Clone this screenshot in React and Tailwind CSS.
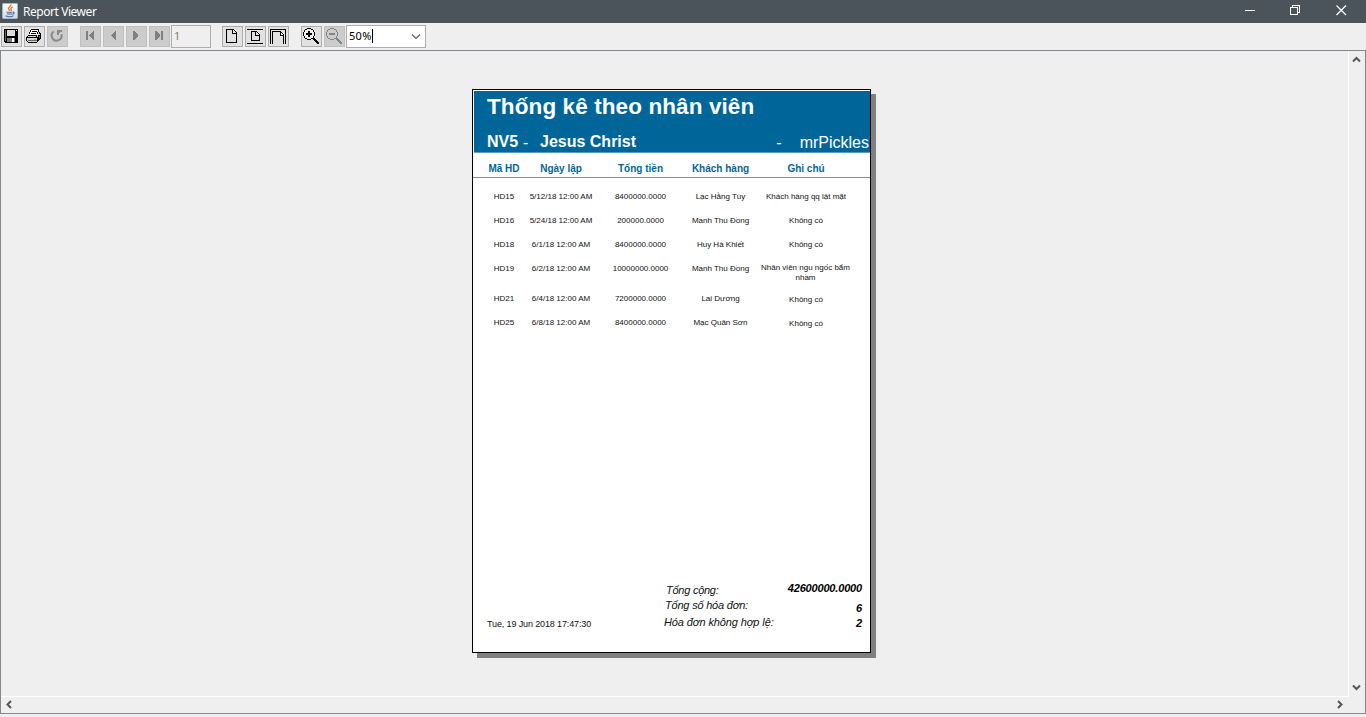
import React from "react";

const rows = [
  { id: "HD15", date: "5/12/18 12:00 AM", total: "8400000.0000", name: "Lạc Hằng Tùy", note: "Khách hàng qq lật mặt", h: "h-6", pad: "" },
  { id: "HD16", date: "5/24/18 12:00 AM", total: "200000.0000", name: "Manh Thu Đồng", note: "Không có", h: "h-6", pad: "" },
  { id: "HD18", date: "6/1/18 12:00 AM", total: "8400000.0000", name: "Huy Hà Khiết", note: "Không có", h: "h-6", pad: "" },
  { id: "HD19", date: "6/2/18 12:00 AM", total: "10000000.0000", name: "Manh Thu Đồng", note: "Nhân viên ngu ngốc bẩm nhầm", h: "h-[30px]", pad: "-mt-px -ml-px" },
  { id: "HD21", date: "6/4/18 12:00 AM", total: "7200000.0000", name: "Lai Dương", note: "Không có", h: "h-6", pad: "pt-px" },
  { id: "HD25", date: "6/8/18 12:00 AM", total: "8400000.0000", name: "Mạc Quân Sơn", note: "Không có", h: "h-6", pad: "pt-px" },
];

const COLS = "grid grid-cols-[34px_80px_79px_81px_90px] pl-[14px] text-center";

function Icon({ children, className = "" }) {
  return (
    <svg width="19" height="19" viewBox="0 0 19 19" shapeRendering="crispEdges" fill="none" stroke="#000" className={"shrink-0 " + className}>
      {children}
    </svg>
  );
}

function Btn({ disabled, children }) {
  return (
    <button
      className={
        "flex h-[21px] w-[21px] shrink-0 items-center justify-center border " +
        (disabled ? "border-[#bfbfbf] bg-[#cccccc]" : "border-[#adadad] bg-[#e1e1e1]")
      }
    >
      {children}
    </button>
  );
}

function JavaLogo() {
  return (
    <svg width="16" height="16" viewBox="0 0 16 16" fill="none" className="shrink-0">
      <defs>
        <linearGradient id="tile" x1="0" y1="0" x2="0" y2="1">
          <stop offset="0" stopColor="#ffffff" />
          <stop offset="1" stopColor="#cfdbe6" />
        </linearGradient>
      </defs>
      <rect x=".5" y=".5" width="15" height="15" rx="1" fill="url(#tile)" stroke="#9fb6cb" />
      <path d="M8.800 1.500c.8 1.800-3 2.600-2.300 4.300.2.700 1.100 1.200 1.300 2M10.800 3.800c-1.800.8-2.500 1.700-1.600 2.800.2.400.1.800-.2 1.300" stroke="#e8762c" strokeWidth="1.300" />
      <path d="M4.500 9.300h5.700M5 11h5M3.500 12.800c2 .9 6 .9 8 0M10.600 9.200c2-.6 2.500 1.200-.2 2.200" stroke="#436d93" strokeWidth="1.100" />
    </svg>
  );
}

function Magnifier({ plus, color, light }) {
  return (
    <Icon>
      <path d="M4 3h5v1h2v2h1v4h-1v1h-2v1h-4v-1h-2v-2h-1v-4h1v-1h1z" fill={light} stroke="none" />
      <path d="M5 1.500h4M3 2.500h2M9 2.500h2M2.500 3v2M11.500 3v2M1.500 5v4M12.500 5v4M2.500 9v2M11.500 9v2M3 11.500h2M9 11.500h3M5 12.500h4" stroke={color} />
      <path d="M4 7h6" stroke={color} strokeWidth="2" />
      {plus && <path d="M7 4v6" stroke={color} strokeWidth="2" />}
      <path d="M11 11h2v1h1v1h1v1h1v1h1v2h-2v-1h-1v-1h-1v-1h-1v-1h-1z" fill={color} stroke="none" />
    </Icon>
  );
}

function TitleBar() {
  return (
    <div className="flex h-[23px] shrink-0 items-start bg-[#4c545b] pl-[2px] text-white">
      <div className="pt-[3px]"><JavaLogo /></div>
      <span className="ml-[5px] pt-1 font-['Noto_Sans',sans-serif] text-[12px] leading-4 tracking-[-0.45px]">Report Viewer</span>
      <div className="ml-auto flex pt-[5px]">
        <svg width="10" height="11" className="mr-[35px]" shapeRendering="crispEdges"><path d="M0 5.500h10" stroke="#fff" /></svg>
        <svg width="11" height="11" className="mr-[35px]" fill="none" stroke="#fff" shapeRendering="crispEdges"><path d="M.5 2.500h7v7h-7zM2.500 2v-1.500h7v7h-2" /></svg>
        <svg width="11" height="11" className="mr-[19px]" stroke="#fff" strokeWidth="1.200"><path d="M.5.5l9.500 9.500M10 .5l-9.500 9.500" /></svg>
      </div>
    </div>
  );
}

function Toolbar() {
  return (
    <div className="flex h-[27px] shrink-0 items-center pb-px pl-px font-['Noto_Sans',sans-serif] text-[11px]">
      <div className="flex gap-[2px]">
        <Btn>
          <Icon>
            <path d="M2 2h14v14h-13v-1h-1z" fill="#000" stroke="none" />
            <path d="M5 3h8v6h-8z" fill="#dcdcdc" stroke="none" />
            <path d="M5 11h8v4h-8z" fill="#777" stroke="none" />
            <path d="M10 11h2v4h-2zM14 3h1v1h-1z" fill="#fff" stroke="none" />
            <path d="M3.500 3v11" stroke="#666" />
          </Icon>
        </Btn>
        <Btn>
          <Icon>
            <path d="M6 2h9l-3 7h-9z" fill="#fff" stroke="none" />
            <path d="M6 2.500h8M13.500 3v2M12.500 5v2M5.500 3v2M4.500 5v2M7 4.500h5M6 6.500h5" />
            <path d="M2 8h10l4-3v6l-3 4h-10l-1-1z" fill="#d8d8d8" stroke="none" />
            <path d="M3 8.500h8M2 9.500h1M1.500 10v4M2 10.500h10M2 14.500h1M3 15.500h9M12.500 10v5M13.500 8v6M15.500 6v6M14.500 11v2M14.500 5v2M11.500 8v2M14.500 8v1" />
            <path d="M3 13.500h9M14.500 9v2" stroke="#666" />
            <path d="M9 12.500h2" stroke="#c6b800" />
          </Icon>
        </Btn>
        <Btn disabled>
          <Icon>
            <path d="M5.700 4.500a5 5 0 1 0 7.800 2.800" stroke="#888" strokeWidth="2" shapeRendering="auto" />
            <path d="M9 3h5v2h-2l-1 1v2h-2z" fill="#888" stroke="none" />
          </Icon>
        </Btn>
      </div>
      <div className="ml-3 flex gap-[2px]">
        <Btn disabled><Icon><path d="M5 4h2v9h-2zM12 4h1v9h-1l-4-4v-1z" fill="#808080" stroke="none" /></Icon></Btn>
        <Btn disabled><Icon><path d="M11 4h1v9h-1l-4-4v-1z" fill="#808080" stroke="none" /></Icon></Btn>
        <Btn disabled><Icon><path d="M6 4h1l4 4v1l-4 4h-1z" fill="#808080" stroke="none" /></Icon></Btn>
        <Btn disabled><Icon><path d="M5 4h1l4 4v1l-4 4h-1zM11 4h2v9h-2z" fill="#808080" stroke="none" /></Icon></Btn>
      </div>
      <div className="ml-px flex h-[23px] w-10 items-center border border-[#abadb3] pl-[2px] text-[#8a7a55]">1</div>
      <div className="ml-[11px] flex gap-[2px]">
        <Btn><Icon><path d="M3.500 2.500h7l3 3v10h-10zM9.500 3v3.500h4" /></Icon></Btn>
        <Btn><Icon><path d="M1 2.500h16M1 16.500h16M5.500 4.500h5l3 3v6h-8zM9.500 5v3.500h4" /></Icon></Btn>
        <Btn><Icon><path d="M1.500 17v-15M1 2.500h16M16.500 2v15M3.500 17v-12.500h8l3 3v9.500M11.500 4.500v3.500h3" /></Icon></Btn>
      </div>
      <div className="ml-3 flex gap-[2px]">
        <Btn><Magnifier plus color="#000" light="#f0f0f0" /></Btn>
        <Btn disabled><Magnifier color="#858585" light="#cccccc" /></Btn>
      </div>
      <div className="ml-px flex h-[23px] w-20 items-center border border-[#adadad] bg-white pl-[2px] pr-[4px]">
        <span className="tracking-[0.3px] text-black">50%</span>
        <span className="h-[14px] w-px bg-black" />
        <svg width="10" height="7" className="ml-auto" fill="none" stroke="#606060" strokeWidth="1.200"><path d="M1 1.500l4 4 4-4" /></svg>
      </div>
    </div>
  );
}

function Arrow({ d }) {
  return (
    <svg width="9" height="9" viewBox="0 0 9 9" fill="none" stroke="#555" strokeWidth="2">
      <path d={d} />
    </svg>
  );
}

function Report() {
  return (
    <div className="flex h-[564px] w-[399px] flex-col whitespace-nowrap border border-black bg-white font-['Liberation_Sans',Arial,sans-serif] shadow-[5px_5px_0_0_#808080]">
      <div className="ml-px mt-px h-[62px] shrink-0 border-b border-[#5c9bbd] bg-[#006699] pl-[13px] pt-[3px] text-white">
        <div className="text-[22.500px] font-bold leading-[26px] tracking-[0.100px]">Thống kê theo nhân viên</div>
        <div className="mt-3 flex text-[16px] leading-5">
          <span className="w-[36px] font-bold">NV5</span>
          <span className="w-[17px] pt-px">-</span>
          <span className="font-bold">Jesus Christ</span>
          <span className="ml-auto pt-px">-</span>
          <span className="ml-[18px] pr-px pt-px">mrPickles</span>
        </div>
      </div>
      <div className={COLS + " h-[25px] shrink-0 border-b border-[#8c8c8c] pt-[10px] text-[10px] font-bold leading-3 text-[#006699]"}>
        <span>Mã HD</span><span>Ngày lập</span><span>Tổng tiền</span><span>Khách hàng</span><span>Ghi chú</span>
      </div>
      <div className="pt-[14px] text-[8px] leading-[10px] text-[#111]">
        {rows.map((r) => (
          <div key={r.id} className={COLS + " " + r.h}>
            <span>{r.id}</span>
            <span>{r.date}</span>
            <span>{r.total}</span>
            <span>{r.name}</span>
            <span className={"whitespace-normal " + r.pad}>{r.note}</span>
          </div>
        ))}
      </div>
      <div className="mt-auto flex h-[69px] shrink-0 pl-[14px] pr-2">
        <span className="w-[177px] pt-[35px] text-[9px] leading-3 tracking-[-0.130px] text-[#111]">Tue, 19 Jun 2018 17:47:30</span>
        <div className="flex flex-col text-[11px] italic leading-[14px] text-[#111]">
          <span className="pl-[2px] tracking-[-0.250px]">Tổng cộng:</span>
          <span className="mt-px pl-px tracking-[-0.200px]">Tổng số hóa đơn:</span>
          <span className="mt-[3px] tracking-[-0.100px]">Hóa đơn không hợp lệ:</span>
        </div>
        <div className="-mt-[2px] ml-auto flex flex-col text-right text-[11px] font-bold italic leading-[14px]">
          <span className="tracking-[-0.170px]">42600000.0000</span>
          <span className="mt-[6px]">6</span>
          <span className="mt-px">2</span>
        </div>
      </div>
    </div>
  );
}

export default function App() {
  return (
    <div className="flex h-[717px] w-[1366px] flex-col overflow-hidden bg-[#efefef]">
      <TitleBar />
      <Toolbar />
      <div className="flex h-[664px] shrink-0 flex-col border border-[#828790]">
        <div className="flex h-[646px]">
          <div className="flex w-[1348px] justify-center border-b border-r border-white pr-[6px] pt-[38px]">
            <Report />
          </div>
          <div className="flex flex-1 flex-col items-center justify-between pb-[5px] pr-[2px] pt-1">
            <Arrow d="M1 6.500l3.500-3.500 3.500 3.500" />
            <Arrow d="M1 2.500l3.500 3.500 3.500-3.500" />
          </div>
        </div>
        <div className="flex flex-1 items-center justify-between pb-[2px] pl-1 pr-[21px]">
          <Arrow d="M6 1l-3.500 3.500 3.500 3.500" />
          <Arrow d="M3 1l3.500 3.500-3.500 3.500" />
        </div>
      </div>
    </div>
  );
}
